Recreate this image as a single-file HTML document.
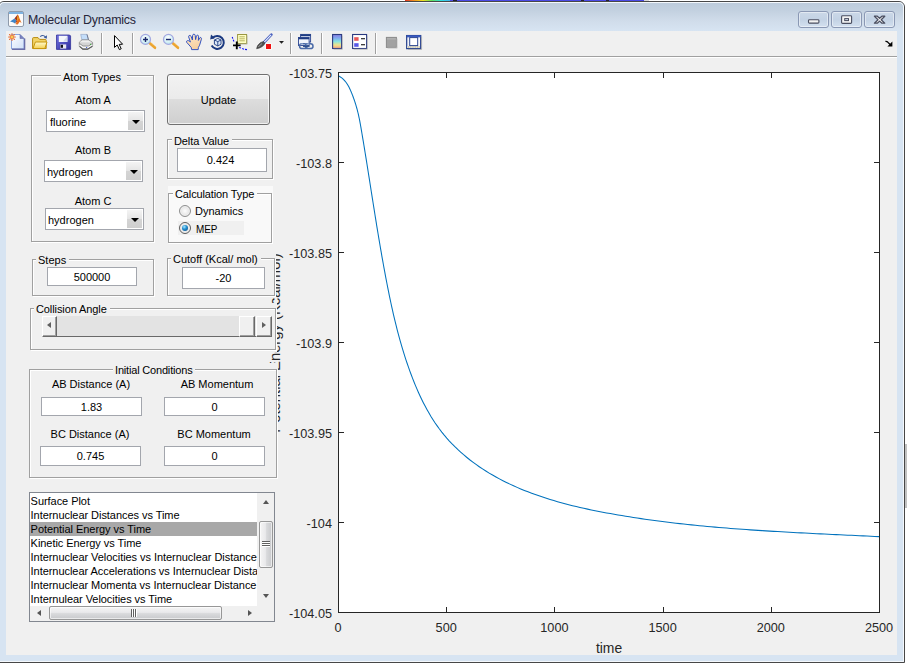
<!DOCTYPE html>
<html><head><meta charset="utf-8">
<style>
html,body{margin:0;padding:0;}
body{width:907px;height:663px;position:relative;overflow:hidden;background:#fff;font-family:"Liberation Sans",sans-serif;font-size:11px;color:#000;}
.abs{position:absolute;}
#frame{left:-2px;top:1px;width:907px;height:662px;box-sizing:border-box;border:1px solid #474747;border-radius:6px 6px 0 0;background:#d7e4f2;overflow:hidden;}
#frame .hl{left:0;top:0;right:0;bottom:0;border:1px solid #f4f8fc;border-radius:5px 5px 0 0;}
#titlegrad{left:0;top:0px;width:905px;height:29px;background:linear-gradient(#bccbdb 0%,#c3d1e0 30%,#d0dcea 65%,#d7e4f2 100%);}
#content{left:6px;top:31px;width:891px;height:624px;background:#f0f0f0;}
#title{left:28px;top:12px;font-size:12.4px;line-height:16px;color:#26263a;white-space:nowrap;letter-spacing:-0.21px;}
.wbtn{top:11px;width:31px;height:17px;box-sizing:border-box;border:1px solid #8a98b4;border-radius:3px;background:linear-gradient(#cbd8e8,#c3d2e4 50%,#d3e0ef);box-shadow:inset 0 0 0 1px rgba(255,255,255,.45);}
.lbl{position:absolute;white-space:nowrap;font-size:11px;line-height:13px;color:#000;}
.panel{position:absolute;box-sizing:border-box;border:1px solid #a0a0a0;box-shadow:inset 1px 1px 0 #fff,1px 1px 0 #fff;}
.ptitle{position:absolute;background:#f0f0f0;white-space:nowrap;font-size:11px;line-height:13px;padding:0 3px 0 2px;}
.edit{position:absolute;box-sizing:border-box;border:1px solid #a3a6ad;background:#fff;text-align:center;font-size:11px;}
.combo{position:absolute;box-sizing:border-box;border:1px solid #a3a6ad;background:#fff;font-size:11px;}
.combo .btn{position:absolute;right:1px;top:1px;bottom:1px;width:15px;background:linear-gradient(#f4f4f4,#e4e4e4 50%,#d4d4d4 51%,#cfcfcf);}
.combo .btn:after{content:"";position:absolute;left:4px;top:8px;border:4px solid transparent;border-top:4px solid #000;border-bottom:0;}
.tick{font-size:12.7px;color:#262626;white-space:nowrap;position:absolute;line-height:14px;}

.radio{width:12px;height:12px;box-sizing:border-box;border:1px solid #8e8f8f;border-radius:50%;background:radial-gradient(circle at 50% 50%,#fdfdfd 0,#ececec 45%,#d6d6d6 100%);box-shadow:inset 0 0 0 1px #f0f0f0;}
.radio.on{border-color:#5e5e5e;}
.radio.on:after{content:"";position:absolute;left:2px;top:2px;width:6px;height:6px;border-radius:50%;background:radial-gradient(circle at 38% 32%,#a8e8ff 0,#2490d0 40%,#0a427c 100%);}
.sbtn{background:#f0f0f0;box-sizing:border-box;border-left:1px solid #fff;border-top:1px solid #fff;border-right:1px solid #696969;border-bottom:1px solid #696969;box-shadow:inset -1px -1px 0 #a0a0a0;}
.thumb{box-sizing:border-box;border:1px solid #979797;border-radius:2px;box-shadow:inset 0 0 0 1px rgba(255,255,255,.6);}
</style></head><body>
<!-- window frame -->
<div id="frame" class="abs"><div id="titlegrad" class="abs"></div><div class="abs hl"></div></div>
<div id="content" class="abs"></div>
<div id="title" class="abs">Molecular Dynamics</div>

<div class="abs" style="left:905px;top:444px;width:2px;height:64px;background:#c2c2c2"></div>
<div class="abs" style="left:405px;top:0;width:45px;height:1px;background:linear-gradient(90deg,#e03020,#f09020 20%,#f0e020 40%,#60e060 60%,#30e0e0 80%,#40b0f0)"></div>
<div class="abs" style="left:450px;top:0;width:194px;height:1px;background:#4a4ae6"></div>
<div class="abs" style="left:453px;top:0;width:4px;height:1px;background:#202030"></div>
<div class="abs" style="left:581px;top:0;width:3px;height:1px;background:#202030"></div>
<div class="abs" style="left:606px;top:0;width:3px;height:1px;background:#202030"></div>
<div class="abs" style="left:644px;top:0;width:5px;height:1px;background:#d8d8d8"></div>
<!-- title icon -->
<svg class="abs" style="left:8px;top:11px" width="16" height="16" viewBox="0 0 16 16">
  <rect x="0.5" y="0.5" width="15" height="15" rx="1.5" fill="#fbfbfb" stroke="#8e9aab"/>
  <rect x="1" y="1" width="14" height="2" fill="#7fb4e2"/>
  <g transform="translate(0,1)"><path d="M2 9.5 L6.5 6.5 L8.5 8.5 L7 11.5 L5 10.2 Z" fill="#3f86c8"/>
  <path d="M6.5 6.5 L9.6 2.6 L10.6 5 L9 10 L7 11.8 L8.5 8.5 Z" fill="#a0361f"/>
  <path d="M9.6 2.6 C10.6 3.2 11.6 7 13.6 11 L11.6 9.8 L9.8 12.6 L7.6 12.2 L9 9.6 Z" fill="#e8701f"/>
  <path d="M9.6 2.8 L10.3 6.2 L9.3 9.4 Z" fill="#f4c31c"/></g>
</svg>
<!-- window buttons -->
<div class="abs wbtn" style="left:798px"></div>
<div class="abs wbtn" style="left:831px"></div>
<div class="abs wbtn" style="left:864px"></div>
<svg class="abs" style="left:798px;top:11px" width="97" height="17" viewBox="0 0 97 17">
  <rect x="10.5" y="8.7" width="10.4" height="3.4" rx="0.9" fill="#f3f3f3" stroke="#4a4e60" stroke-width="1.1"/>
  <rect x="43.6" y="4.8" width="10" height="7.6" rx="0.9" fill="#f3f3f3" stroke="#4a4e60" stroke-width="1.1"/>
  <rect x="46.7" y="7.6" width="3.8" height="2" fill="#cfd9e6" stroke="#4a4e60" stroke-width="1"/>
  <path d="M76.4 5.2 L79.3 5.2 L81.6 7.3 L83.9 5.2 L86.8 5.2 L83.2 8.7 L86.8 12.2 L83.9 12.2 L81.6 10.1 L79.3 12.2 L76.4 12.2 L80 8.7 Z" fill="#f3f3f3" stroke="#4a4e60" stroke-width="1.2" stroke-linejoin="round"/>
</svg>
<!-- toolbar -->
<div class="abs" style="left:6px;top:56px;width:891px;height:1px;background:#a0a0a0"></div>
<div class="abs" style="left:6px;top:57px;width:891px;height:1px;background:#ffffff"></div>
<svg class="abs" style="left:0;top:0" width="907" height="60" viewBox="0 0 907 60">
<defs>
<linearGradient id="gpage" x1="0" y1="0" x2="1" y2="1"><stop offset="0" stop-color="#ffffff"/><stop offset="1" stop-color="#cfe0f8"/></linearGradient>
<linearGradient id="gfold" x1="0" y1="0" x2="0" y2="1"><stop offset="0" stop-color="#fffbd0"/><stop offset="1" stop-color="#f4d050"/></linearGradient>
<linearGradient id="gsave" x1="0" y1="0" x2="1" y2="1"><stop offset="0" stop-color="#7070e0"/><stop offset="1" stop-color="#3030a0"/></linearGradient>
<linearGradient id="gcb" x1="0" y1="0" x2="0" y2="1"><stop offset="0" stop-color="#8a7ee0"/><stop offset="0.25" stop-color="#80a8f0"/><stop offset="0.5" stop-color="#88e4e0"/><stop offset="0.75" stop-color="#f2e488"/><stop offset="1" stop-color="#f0a088"/></linearGradient>
<radialGradient id="glens" cx="0.45" cy="0.35" r="0.7"><stop offset="0" stop-color="#ffffff"/><stop offset="0.6" stop-color="#d6f2f6"/><stop offset="1" stop-color="#b0e0ec"/></radialGradient>
<linearGradient id="ghand" x1="0" y1="0" x2="0.3" y2="1"><stop offset="0" stop-color="#fde8cc"/><stop offset="1" stop-color="#f6cfa0"/></linearGradient>
</defs>
<!-- separators -->
<g shape-rendering="crispEdges">
<path d="M101.5 33v21M132.5 33v21M290.5 33v21M321.5 33v21M375.5 33v21" stroke="#a0a0a0" fill="none"/>
<path d="M102.5 33v21M133.5 33v21M291.5 33v21M322.5 33v21M376.5 33v21" stroke="#ffffff" fill="none"/>
</g>
<!-- new -->
<path d="M11.5 34.5 H20 L24 38.5 V49 H11.5 Z" fill="url(#gpage)" stroke="#8aa6e0" stroke-width="1"/>
<path d="M12 49.2 H24.6 V38.6" fill="none" stroke="#6a6ea8" stroke-width="1.4"/>
<path d="M20 34.5 V38.5 H24 Z" fill="#7a82c0" stroke="#6a6ea8" stroke-width="0.6"/>
<g stroke="#e8703a" stroke-width="1.1" stroke-linecap="round"><path d="M12 33.6v1M12 39.4v1M8.6 37h1M14.4 37h1M9.5 34.5l.7.7M13.8 38.8l.7.7M14.5 34.5l-.7.7M10.2 38.8l-.7.7"/></g>
<circle cx="12" cy="37" r="2.3" fill="#f08a4a"/><circle cx="12" cy="37" r="1.1" fill="#f4e05a"/>
<!-- open -->
<path d="M32.6 48.5 V38.6 Q32.6 37.6 33.6 37.6 H38 L39.6 39.4 H45.4 Q46.2 39.4 46.2 40.4 V48.5 Z" fill="#f2d468" stroke="#b88a10" stroke-width="1"/>
<path d="M33 48.6 L35.4 42 H47 L44.8 48.6 Z" fill="url(#gfold)" stroke="#c8960c" stroke-width="1"/>
<path d="M40.2 36.6 Q43 34.2 45.6 37.2" fill="none" stroke="#3a5a9a" stroke-width="1.1"/>
<path d="M47 35.2 L46.8 38.8 L43.8 37.6 Z" fill="#3a5a9a"/>
<!-- save -->
<path d="M56.5 35 H69.6 L70.6 36 V49.4 H56.5 Z" fill="url(#gsave)" stroke="#34349a" stroke-width="0.8"/>
<rect x="58.8" y="35.8" width="8.6" height="6.2" fill="#f4f6fc"/>
<path d="M63 41.6 L67.4 36 V41.8 Z" fill="#d4daec"/>
<rect x="60.2" y="44.4" width="6" height="4.2" fill="#e8e8f0"/>
<rect x="60.6" y="44.8" width="2.4" height="3" fill="#101020"/>
<!-- print -->
<path d="M80.7 34.4 H87 L88.6 40.2 H82 Z" fill="#c4defa" stroke="#8aa0c4" stroke-width="0.6"/>
<path d="M87 34.4 L88.6 40.2" stroke="#6a7088" stroke-width="0.9" fill="none"/>
<path d="M79.3 42.2 L82 39.8 H88.6 L92.6 42.4 V46.2 L87.6 49.4 H82.8 L79.3 46.4 Z" fill="#d4d4d4" stroke="#7c7c7c" stroke-width="0.7"/>
<path d="M79.8 42.3 L82.2 40.4 H88.4 L92 42.6 Z" fill="#efefef"/>
<path d="M79.6 43.6 L83 46 H88.4 L92.4 43.6" fill="none" stroke="#8a8a8a" stroke-width="0.9"/>
<path d="M79.6 45 L83 47.4 H88.2 L92.4 45" fill="none" stroke="#fafafa" stroke-width="1.1"/>
<path d="M79.6 46.4 L82.9 49.1 H87.6 L92.4 46.2" fill="none" stroke="#5c5c5c" stroke-width="1.1"/>
<rect x="90" y="43.8" width="1.1" height="1.1" fill="#38b038"/>
<rect x="86" y="47" width="1.2" height="1" fill="#5068d8"/>
<!-- pointer -->
<path d="M114.5 35.6 V47.4 L117.2 45 L119.4 49.6 L121.2 48.8 L119.2 44.4 L122.6 44.2 Z" fill="#ffffff" stroke="#000000" stroke-width="1" stroke-linejoin="miter"/>
<!-- zoom in -->
<path d="M149.8 43.2 L155 47.8" stroke="#eca430" stroke-width="2.5" stroke-linecap="round"/>
<path d="M150.6 42.4 L156 47" stroke="#f8c860" stroke-width="0.8" stroke-dasharray="1 1"/>
<circle cx="145.5" cy="39.4" r="5" fill="url(#glens)" stroke="#a4a8e0" stroke-width="1.2"/>
<path d="M143 39.5 h5 M145.5 37 v5" stroke="#1c2a6c" stroke-width="1.4"/>
<!-- zoom out -->
<path d="M172.8 43.2 L178 47.8" stroke="#eca430" stroke-width="2.5" stroke-linecap="round"/>
<path d="M173.6 42.4 L179 47" stroke="#f8c860" stroke-width="0.8" stroke-dasharray="1 1"/>
<circle cx="168.5" cy="39.4" r="5" fill="url(#glens)" stroke="#a4a8e0" stroke-width="1.2"/>
<path d="M166 39.5 h5" stroke="#1c2a6c" stroke-width="1.4"/>
<!-- hand -->
<path d="M191.6 49.6 L191.2 47.4 L186.6 42.2 Q186.2 41 187.4 40.6 Q188.6 40.4 189.6 41.4 L190.4 42 L188.6 36.8 Q188.6 35.4 189.8 35.4 Q190.8 35.4 191.2 36.6 L192.4 40 L192.6 35.4 Q192.8 34.2 193.9 34.2 Q195 34.2 195.2 35.4 L195.6 39.6 L196.4 36 Q196.8 35 197.8 35.2 Q198.8 35.5 198.6 36.8 L198.4 40.4 L199.6 38 Q200.2 37.2 201 37.6 Q201.7 38.1 201.4 39.2 L199.6 45.2 L198.4 47.4 L198.2 49.6 Z" fill="url(#ghand)" stroke="#2a4cc0" stroke-width="0.95"/>
<!-- rotate -->
<path d="M212.2 38.4 A6.5 6.5 0 1 1 211.6 45.6" fill="none" stroke="#1c3a80" stroke-width="2"/>
<path d="M210.2 39.4 L211 34.4 L215 38 Z" fill="#1c3a80"/>
<path d="M214.4 40 L217.8 38.4 L221 40 V44.2 L217.8 46 L214.4 44.2 Z" fill="#dce8f8" stroke="#1c3a80" stroke-width="0.9"/>
<path d="M214.4 40 L217.8 41.6 L221 40 M217.8 41.6 V46" fill="none" stroke="#1c3a80" stroke-width="0.9"/>
<!-- data cursor -->
<rect x="237.6" y="34.5" width="9" height="9" fill="#ffffc4" stroke="#9a9640" stroke-width="1"/>
<path d="M239.4 36.8h5.4M239.4 38.8h5.4M239.4 40.8h5.4" stroke="#b0ac58" stroke-width="0.9"/>
<path d="M247.2 35.4V44.2H238.4" fill="none" stroke="#c0c0b0" stroke-width="0.8"/>
<path d="M232.2 37 L232.8 38.6 M233.2 39.8 L234 41.4 M239.2 47.4 L241 48 M242.2 48.6 L244 49.2 M245 49.4 L247 49.6" stroke="#1010f0" stroke-width="1.1" fill="none"/>
<path d="M233 45.4 h7.6 M236.8 41.4 v7.8" stroke="#000" stroke-width="1.9"/>
<!-- brush -->
<path d="M271.4 34.6 L263.4 43" stroke="#3a52b8" stroke-width="2.6" stroke-linecap="round"/>
<path d="M270.9 35.1 L264 42.4" stroke="#e4ecff" stroke-width="1.2" stroke-linecap="round"/>
<path d="M263.6 41.6 L265 43.2 Q263 47.6 256.6 48.8 Q256.8 45 260.6 42.4 Z" fill="#505050" stroke="#303030" stroke-width="0.5"/>
<path d="M258.4 47 Q260 44.8 262 43.6" stroke="#b0b0b0" stroke-width="0.8" fill="none"/>
<rect x="265.4" y="43.4" width="6.2" height="6.2" fill="#ffffff"/>
<rect x="266" y="44" width="5" height="5" fill="#f01010"/>
<path d="M279 41 H284 L281.5 43.8 Z" fill="#202020"/>
<!-- link -->
<rect x="300.6" y="34.4" width="10" height="7.6" fill="#e8eef8" stroke="#2a4490" stroke-width="0.9"/>
<rect x="300.6" y="34.4" width="10" height="1.8" fill="#1c3a80"/>
<rect x="298.5" y="37.5" width="10.6" height="8" fill="#f0f4fc" stroke="#2a4490" stroke-width="0.9"/>
<rect x="298.5" y="37.5" width="10.6" height="1.8" fill="#1c3a80"/>
<rect x="299.6" y="43.8" width="7.4" height="4.8" rx="2.4" fill="none" stroke="#4a6aa8" stroke-width="1.5"/>
<rect x="305.4" y="43.8" width="7.6" height="4.8" rx="2.4" fill="none" stroke="#4a6aa8" stroke-width="1.5"/>
<path d="M303 46.2 h6.6" stroke="#2a4a88" stroke-width="1.4"/>
<path d="M300.6 44.6 q1-.8 2.4-.6 M306.6 44.6 q1-.8 2.6-.6" stroke="#dfe8f6" stroke-width="0.7" fill="none"/>
<!-- colorbar -->
<rect x="332.6" y="34.5" width="9" height="14" fill="url(#gcb)" stroke="#2a3a80" stroke-width="1.1"/>
<path d="M342.4 35.6 V49.3 H333.6" fill="none" stroke="#b8b8b8" stroke-width="0.8"/>
<!-- legend -->
<rect x="352.6" y="34.5" width="14" height="14" fill="#ffffff" stroke="#2a3a80" stroke-width="1.1"/>
<path d="M367.4 35.6 V49.3 H353.6" fill="none" stroke="#b8b8b8" stroke-width="0.8"/>
<rect x="354.2" y="37.2" width="4.4" height="3.6" fill="#e85858"/>
<rect x="354.2" y="43.2" width="4.4" height="3.6" fill="#5858e8"/>
<path d="M361 38.8 h4 M361 44.8 h4" stroke="#000" stroke-width="1.1"/>
<!-- gray square -->
<rect x="386.4" y="37.4" width="10" height="10" fill="#a2a2a2" stroke="#8a8a8a" stroke-width="1"/>
<rect x="387" y="38" width="8.8" height="1.6" fill="#b0b0b0"/>
<path d="M397.2 38.6 V48.2 H387.6" fill="none" stroke="#c8c8c8" stroke-width="0.8"/>
<!-- plot tools -->
<rect x="406.7" y="35.6" width="14" height="13" fill="#ffffff" stroke="#2a4490" stroke-width="1.3"/>
<rect x="407" y="35.4" width="13.4" height="2" fill="#3a5ac0"/>
<rect x="407.4" y="46" width="12.6" height="2" fill="#efe9cc"/>
<rect x="409.7" y="37.6" width="8" height="8" fill="#ffffff" stroke="#2a4490" stroke-width="1"/>
<path d="M408.5 38.4 v7 M419 38.4 v7" stroke="#d8dcec" stroke-width="0.8" stroke-dasharray="1 1"/>
<path d="M408 47 h11.6" stroke="#8088a8" stroke-width="0.7" stroke-dasharray="1 0.8"/>
<path d="M421.6 36.6 V49.4 H408" fill="none" stroke="#a8a8a8" stroke-width="0.8"/>
<!-- right arrow -->
<path d="M885.4 41.4 Q887 41.2 888 42.4 L890.6 45" stroke="#000" stroke-width="1.4" fill="none"/>
<path d="M887.4 46.4 H892.4 V41.6 Z" fill="#000"/>
</svg>

<!-- plot -->
<svg class="abs" style="left:0;top:0" width="907" height="663" viewBox="0 0 907 663">
  <rect x="338.5" y="72.5" width="541.0" height="540.0" fill="#fff"/>
  <path d="M338.60 75.87 L339.60 76.50 L340.69 77.18 L341.71 77.92 L342.67 78.69 L343.57 79.52 L344.42 80.38 L345.21 81.28 L345.96 82.22 L346.66 83.18 L347.32 84.18 L347.94 85.21 L348.53 86.25 L349.09 87.32 L349.63 88.41 L350.14 89.51 L350.63 90.63 L351.11 91.75 L351.58 92.88 L352.03 94.02 L352.48 95.16 L352.92 96.31 L353.35 97.46 L353.76 98.61 L354.17 99.77 L354.57 100.93 L354.96 102.10 L355.33 103.27 L355.70 104.44 L356.06 105.62 L356.40 106.80 L356.74 107.99 L357.07 109.17 L357.38 110.36 L357.69 111.55 L357.98 112.75 L358.27 113.94 L358.54 115.14 L358.80 116.34 L359.06 117.54 L359.31 118.75 L359.55 119.95 L359.78 121.16 L360.01 122.37 L360.23 123.57 L360.45 124.78 L360.66 125.99 L360.87 127.20 L361.08 128.41 L361.29 129.62 L361.95 133.48 L362.59 137.33 L363.24 141.19 L363.87 145.04 L364.51 148.89 L365.13 152.75 L365.76 156.60 L366.38 160.44 L366.99 164.29 L367.60 168.14 L368.21 171.99 L368.82 175.83 L369.43 179.68 L370.03 183.52 L370.64 187.37 L371.24 191.21 L371.85 195.05 L372.45 198.90 L373.06 202.74 L373.67 206.58 L374.28 210.43 L374.89 214.27 L375.51 218.11 L376.13 221.95 L376.75 225.80 L377.38 229.64 L378.02 233.48 L378.66 237.33 L379.30 241.17 L379.96 245.01 L380.61 248.86 L381.28 252.70 L381.95 256.55 L382.64 260.40 L383.33 264.25 L384.03 268.10 L384.74 271.95 L385.46 275.80 L386.19 279.65 L386.94 283.50 L387.69 287.35 L388.46 291.21 L389.24 295.06 L390.04 298.90 L390.86 302.75 L391.69 306.59 L392.55 310.43 L393.42 314.26 L394.32 318.08 L395.23 321.90 L396.18 325.72 L397.14 329.52 L398.13 333.31 L399.15 337.10 L400.19 340.87 L401.27 344.64 L402.37 348.39 L403.51 352.13 L404.67 355.85 L405.87 359.56 L407.11 363.26 L408.38 366.94 L409.68 370.61 L411.03 374.26 L412.41 377.89 L413.83 381.50 L415.29 385.09 L416.80 388.66 L418.35 392.21 L419.96 395.73 L421.62 399.22 L423.33 402.68 L425.11 406.11 L426.94 409.50 L428.84 412.85 L430.81 416.17 L432.86 419.45 L434.97 422.68 L437.17 425.86 L439.44 429.00 L441.80 432.09 L444.24 435.12 L446.77 438.10 L449.39 441.03 L452.09 443.89 L454.87 446.70 L457.71 449.44 L460.63 452.11 L463.60 454.72 L466.63 457.26 L469.71 459.73 L472.85 462.12 L476.03 464.45 L479.25 466.71 L482.52 468.90 L485.83 471.02 L489.17 473.08 L492.56 475.07 L495.98 477.01 L499.43 478.88 L502.91 480.70 L506.42 482.45 L509.96 484.15 L513.52 485.80 L517.11 487.38 L520.72 488.92 L524.34 490.41 L527.98 491.84 L531.64 493.23 L535.31 494.57 L538.99 495.86 L542.67 497.10 L546.37 498.31 L550.08 499.47 L553.79 500.59 L557.51 501.67 L561.24 502.72 L564.97 503.73 L568.72 504.70 L572.47 505.65 L576.23 506.56 L579.99 507.44 L583.77 508.29 L587.55 509.12 L591.33 509.92 L595.12 510.69 L598.92 511.45 L602.73 512.18 L606.54 512.90 L610.35 513.59 L614.17 514.28 L618.00 514.94 L621.83 515.59 L625.67 516.22 L629.51 516.84 L633.36 517.44 L637.21 518.03 L641.07 518.61 L644.93 519.17 L648.80 519.71 L652.67 520.25 L656.54 520.76 L660.42 521.27 L664.30 521.76 L668.18 522.24 L672.07 522.71 L675.96 523.17 L679.85 523.61 L683.74 524.04 L687.64 524.46 L691.54 524.87 L695.45 525.27 L699.35 525.66 L703.26 526.04 L707.17 526.40 L711.08 526.76 L714.99 527.11 L718.90 527.45 L722.82 527.78 L726.73 528.10 L730.65 528.41 L734.56 528.72 L738.48 529.01 L742.40 529.30 L746.32 529.58 L750.23 529.86 L754.15 530.13 L758.07 530.39 L761.99 530.64 L765.90 530.89 L769.82 531.13 L773.73 531.37 L777.65 531.60 L781.56 531.83 L785.47 532.05 L789.38 532.27 L793.29 532.48 L797.19 532.69 L801.10 532.89 L805.00 533.09 L808.90 533.29 L812.79 533.49 L816.69 533.68 L820.58 533.87 L824.47 534.06 L828.35 534.25 L832.23 534.43 L836.11 534.61 L839.98 534.80 L843.86 534.98 L847.72 535.16 L851.58 535.34 L855.44 535.52 L859.30 535.70 L863.15 535.88 L866.99 536.06 L870.83 536.24 L874.67 536.43 L879.00 536.61" fill="none" stroke="#0072bd" stroke-width="1.05"/>
  <g stroke="#262626" stroke-width="1" fill="none" shape-rendering="crispEdges">
  <rect x="338.5" y="72.5" width="541.0" height="540.0"/>
  <path d="M446.7 612.5 v-5.4 M446.7 72.5 v5.4"/><path d="M554.9 612.5 v-5.4 M554.9 72.5 v5.4"/><path d="M663.1 612.5 v-5.4 M663.1 72.5 v5.4"/><path d="M771.3 612.5 v-5.4 M771.3 72.5 v5.4"/><path d="M338.5 162.5 h5.4 M879.5 162.5 h-5.4"/><path d="M338.5 252.5 h5.4 M879.5 252.5 h-5.4"/><path d="M338.5 342.5 h5.4 M879.5 342.5 h-5.4"/><path d="M338.5 432.5 h5.4 M879.5 432.5 h-5.4"/><path d="M338.5 522.5 h5.4 M879.5 522.5 h-5.4"/>
  </g>
</svg>
<div class="tick" style="right:575px;top:67.0px">-103.75</div>
<div class="tick" style="right:575px;top:157.0px">-103.8</div>
<div class="tick" style="right:575px;top:247.0px">-103.85</div>
<div class="tick" style="right:575px;top:337.0px">-103.9</div>
<div class="tick" style="right:575px;top:427.0px">-103.95</div>
<div class="tick" style="right:575px;top:517.0px">-104</div>
<div class="tick" style="right:575px;top:607.0px">-104.05</div>
<div class="tick" style="left:308.0px;top:621px;width:60px;text-align:center">0</div>
<div class="tick" style="left:416.2px;top:621px;width:60px;text-align:center">500</div>
<div class="tick" style="left:524.4px;top:621px;width:60px;text-align:center">1000</div>
<div class="tick" style="left:632.6px;top:621px;width:60px;text-align:center">1500</div>
<div class="tick" style="left:740.8px;top:621px;width:60px;text-align:center">2000</div>
<div class="tick" style="left:849.0px;top:621px;width:60px;text-align:center">2500</div>
<div class="tick" style="left:579px;top:640px;width:60px;text-align:center;font-size:13.9px;line-height:16px">time</div>
<div class="tick" id="ylab" style="left:275px;top:343px;width:0;height:0;font-size:14.8px;"><div style="position:absolute;white-space:nowrap;transform:translate(-50%,-50%) rotate(-90deg);line-height:16px">Potential Energy (Kcal/mol)</div></div>

<!-- ===== left controls ===== -->
<div class="abs" id="leftbg" style="left:29px;top:70px;width:248px;height:555px;"></div>

<!-- Atom Types -->
<div class="panel" style="left:31px;top:75px;width:123px;height:167px"></div>
<div class="ptitle" style="left:61px;top:71px;width:64px;text-align:left;padding:0 0 0 2px">Atom Types</div>
<div class="lbl" style="left:43px;top:94px;width:100px;text-align:center">Atom A</div>
<div class="combo" style="left:46px;top:110px;width:99px;height:22px"><span class="abs" style="left:3px;top:5px;line-height:13px">fluorine</span><div class="btn"></div></div>
<div class="lbl" style="left:43px;top:144px;width:100px;text-align:center">Atom B</div>
<div class="combo" style="left:44px;top:160px;width:99px;height:22px"><span class="abs" style="left:2px;top:5px;line-height:13px">hydrogen</span><div class="btn"></div></div>
<div class="lbl" style="left:43px;top:195px;width:100px;text-align:center">Atom C</div>
<div class="combo" style="left:45px;top:208px;width:99px;height:22px"><span class="abs" style="left:2px;top:5px;line-height:13px">hydrogen</span><div class="btn"></div></div>

<!-- Update button -->
<div class="abs" style="left:167px;top:74px;width:103px;height:51px;box-sizing:border-box;border:1px solid #707070;border-radius:3px;background:linear-gradient(#f2f2f2 0%,#ebebeb 48%,#dddddd 49%,#cfcfcf 100%);box-shadow:inset 0 0 0 1px rgba(255,255,255,.7);text-align:center;line-height:50px;font-size:11px">Update</div>

<!-- Delta Value -->
<div class="panel" style="left:167px;top:139px;width:106px;height:40px"></div>
<div class="ptitle" style="left:172px;top:135px;letter-spacing:-0.1px">Delta Value</div>
<div class="edit" style="left:177px;top:148px;width:90px;height:24px;line-height:23px;padding-right:3px">0.424</div>

<!-- Calculation Type -->
<div class="abs" style="left:168px;top:186px;width:105px;height:58px;background:#f9f9f9"></div>
<div class="panel" style="left:168px;top:193px;width:104px;height:50px;box-shadow:inset 1px 1px 0 #fff,1px 1px 0 #fff"></div>
<div class="ptitle" style="left:173px;top:188px;background:#f9f9f9;letter-spacing:-0.12px">Calculation Type</div>
<div class="abs" style="left:178px;top:221px;width:66px;height:14px;background:#f0f0f0"></div>
<div class="abs radio" style="left:179px;top:205px"></div>
<div class="lbl" style="left:195px;top:205px">Dynamics</div>
<div class="abs radio on" style="left:179px;top:222px"></div>
<div class="lbl" style="left:195.5px;top:222.5px;transform:scaleX(0.9);transform-origin:0 0">MEP</div>

<!-- Steps -->
<div class="panel" style="left:32px;top:259px;width:122px;height:37px"></div>
<div class="ptitle" style="left:36px;top:254px">Steps</div>
<div class="edit" style="left:47px;top:267px;width:90px;height:19px;line-height:18px">500000</div>

<!-- Cutoff -->
<div class="abs" style="left:166px;top:252px;width:110px;height:45px;background:#f0f0f0"></div>
<div class="panel" style="left:167px;top:258px;width:108px;height:38px"></div>
<div class="ptitle" style="left:171px;top:253px">Cutoff (Kcal/ mol)</div>
<div class="edit" style="left:182px;top:267px;width:83px;height:22px;line-height:21px">-20</div>

<!-- Collision Angle -->
<div class="abs" style="left:29px;top:303px;width:248px;height:49px;background:#f0f0f0"></div>
<div class="panel" style="left:30px;top:308px;width:246px;height:42px"></div>
<div class="ptitle" style="left:34px;top:303px;letter-spacing:-0.1px">Collision Angle</div>
<div class="abs" id="slider" style="left:42px;top:316px;width:230px;height:21px;background:#e3e3e3;box-sizing:border-box;border-bottom:1px solid #696969">
  <div class="abs sbtn" style="left:0;top:0;width:15px;height:21px"></div>
  <div class="abs sbtn" style="left:197px;top:0;width:16px;height:21px"></div>
  <div class="abs sbtn" style="left:214px;top:0;width:16px;height:21px"></div>
  <div class="abs" style="left:5px;top:6px;border:3.5px solid transparent;border-right:4.5px solid #606060;border-left:0"></div>
  <div class="abs" style="left:220px;top:6px;border:3.5px solid transparent;border-left:4.5px solid #606060;border-right:0"></div>
</div>

<!-- Initial Conditions -->
<div class="abs" style="left:28px;top:363px;width:250px;height:116px;background:#f0f0f0"></div>
<div class="panel" style="left:29px;top:369px;width:248px;height:109px"></div>
<div class="ptitle" style="left:113px;top:364px;padding:0 3px 0 2px;letter-spacing:-0.18px">Initial Conditions</div>
<div class="lbl" style="left:41px;top:378px;width:100px;text-align:center">AB Distance (A)</div>
<div class="lbl" style="left:167px;top:378px;width:100px;text-align:center">AB Momentum</div>
<div class="edit" style="left:41px;top:397px;width:101px;height:19px;line-height:18px">1.83</div>
<div class="edit" style="left:164px;top:397px;width:101px;height:19px;line-height:18px">0</div>
<div class="lbl" style="left:40px;top:428px;width:100px;text-align:center">BC Distance (A)</div>
<div class="lbl" style="left:164px;top:428px;width:100px;text-align:center">BC Momentum</div>
<div class="edit" style="left:40px;top:446px;width:101px;height:20px;line-height:19px">0.745</div>
<div class="edit" style="left:164px;top:446px;width:101px;height:20px;line-height:19px">0</div>

<!-- Listbox -->
<div class="abs" id="listbox" style="left:29px;top:492px;width:246px;height:130px;box-sizing:border-box;border:1px solid #828790;background:#fff;overflow:hidden">
  <div class="abs" style="left:0;top:29px;width:227px;height:14px;background:#a8a8a8"></div>
  <div class="abs" id="litems" style="letter-spacing:-0.05px;left:0.6px;top:1px;width:226px;height:112px;overflow:hidden;white-space:nowrap;line-height:14px;font-size:11px">
Surface Plot<br>Internuclear Distances vs Time<br>Potential Energy vs Time<br>Kinetic Energy vs Time<br>Internuclear Velocities vs Internuclear Distance<br>Internuclear Accelerations vs Internuclear Distance<br>Internuclear Momenta vs Internuclear Distance<br>Internulear Velocities vs Time
  </div>
  <!-- v scrollbar -->
  <div class="abs" style="left:227px;top:0;width:17px;height:113px;background:#f0f0f0"></div>
  <div class="abs" style="left:232.5px;top:7px;border:3.7px solid transparent;border-bottom:4px solid #555;border-top:0"></div>
  <div class="abs" style="left:232.5px;top:101px;border:3.7px solid transparent;border-top:4px solid #555;border-bottom:0"></div>
  <div class="abs thumb" style="left:229px;top:28px;width:14px;height:47px;background:linear-gradient(90deg,#f5f5f5,#e9e9eb 45%,#d9dadc 55%,#c8c9cc)"></div>
  <div class="abs" style="left:232px;top:48px;width:8px;height:1px;background:#606060;box-shadow:0 2px 0 #606060,0 4px 0 #606060,0 1px 0 #fff,0 3px 0 #fff,0 5px 0 #fff"></div>
  <!-- h scrollbar -->
  <div class="abs" style="left:0;top:113px;width:244px;height:15px;background:#f0f0f0"></div>
  <div class="abs" style="left:6.5px;top:116.5px;border:3.6px solid transparent;border-right:4px solid #555;border-left:0"></div>
  <div class="abs" style="left:217.5px;top:116.5px;border:3.6px solid transparent;border-left:4px solid #555;border-right:0"></div>
  <div class="abs thumb" style="left:19px;top:113px;width:173px;height:14px;background:linear-gradient(#f5f5f5,#e9e9eb 45%,#d9dadc 55%,#c8c9cc)"></div>
  <div class="abs" style="left:101px;top:116px;width:1px;height:8px;background:#606060;box-shadow:2px 0 0 #606060,4px 0 0 #606060,1px 0 0 #fff,3px 0 0 #fff,5px 0 0 #fff"></div>
</div>
</body></html>
